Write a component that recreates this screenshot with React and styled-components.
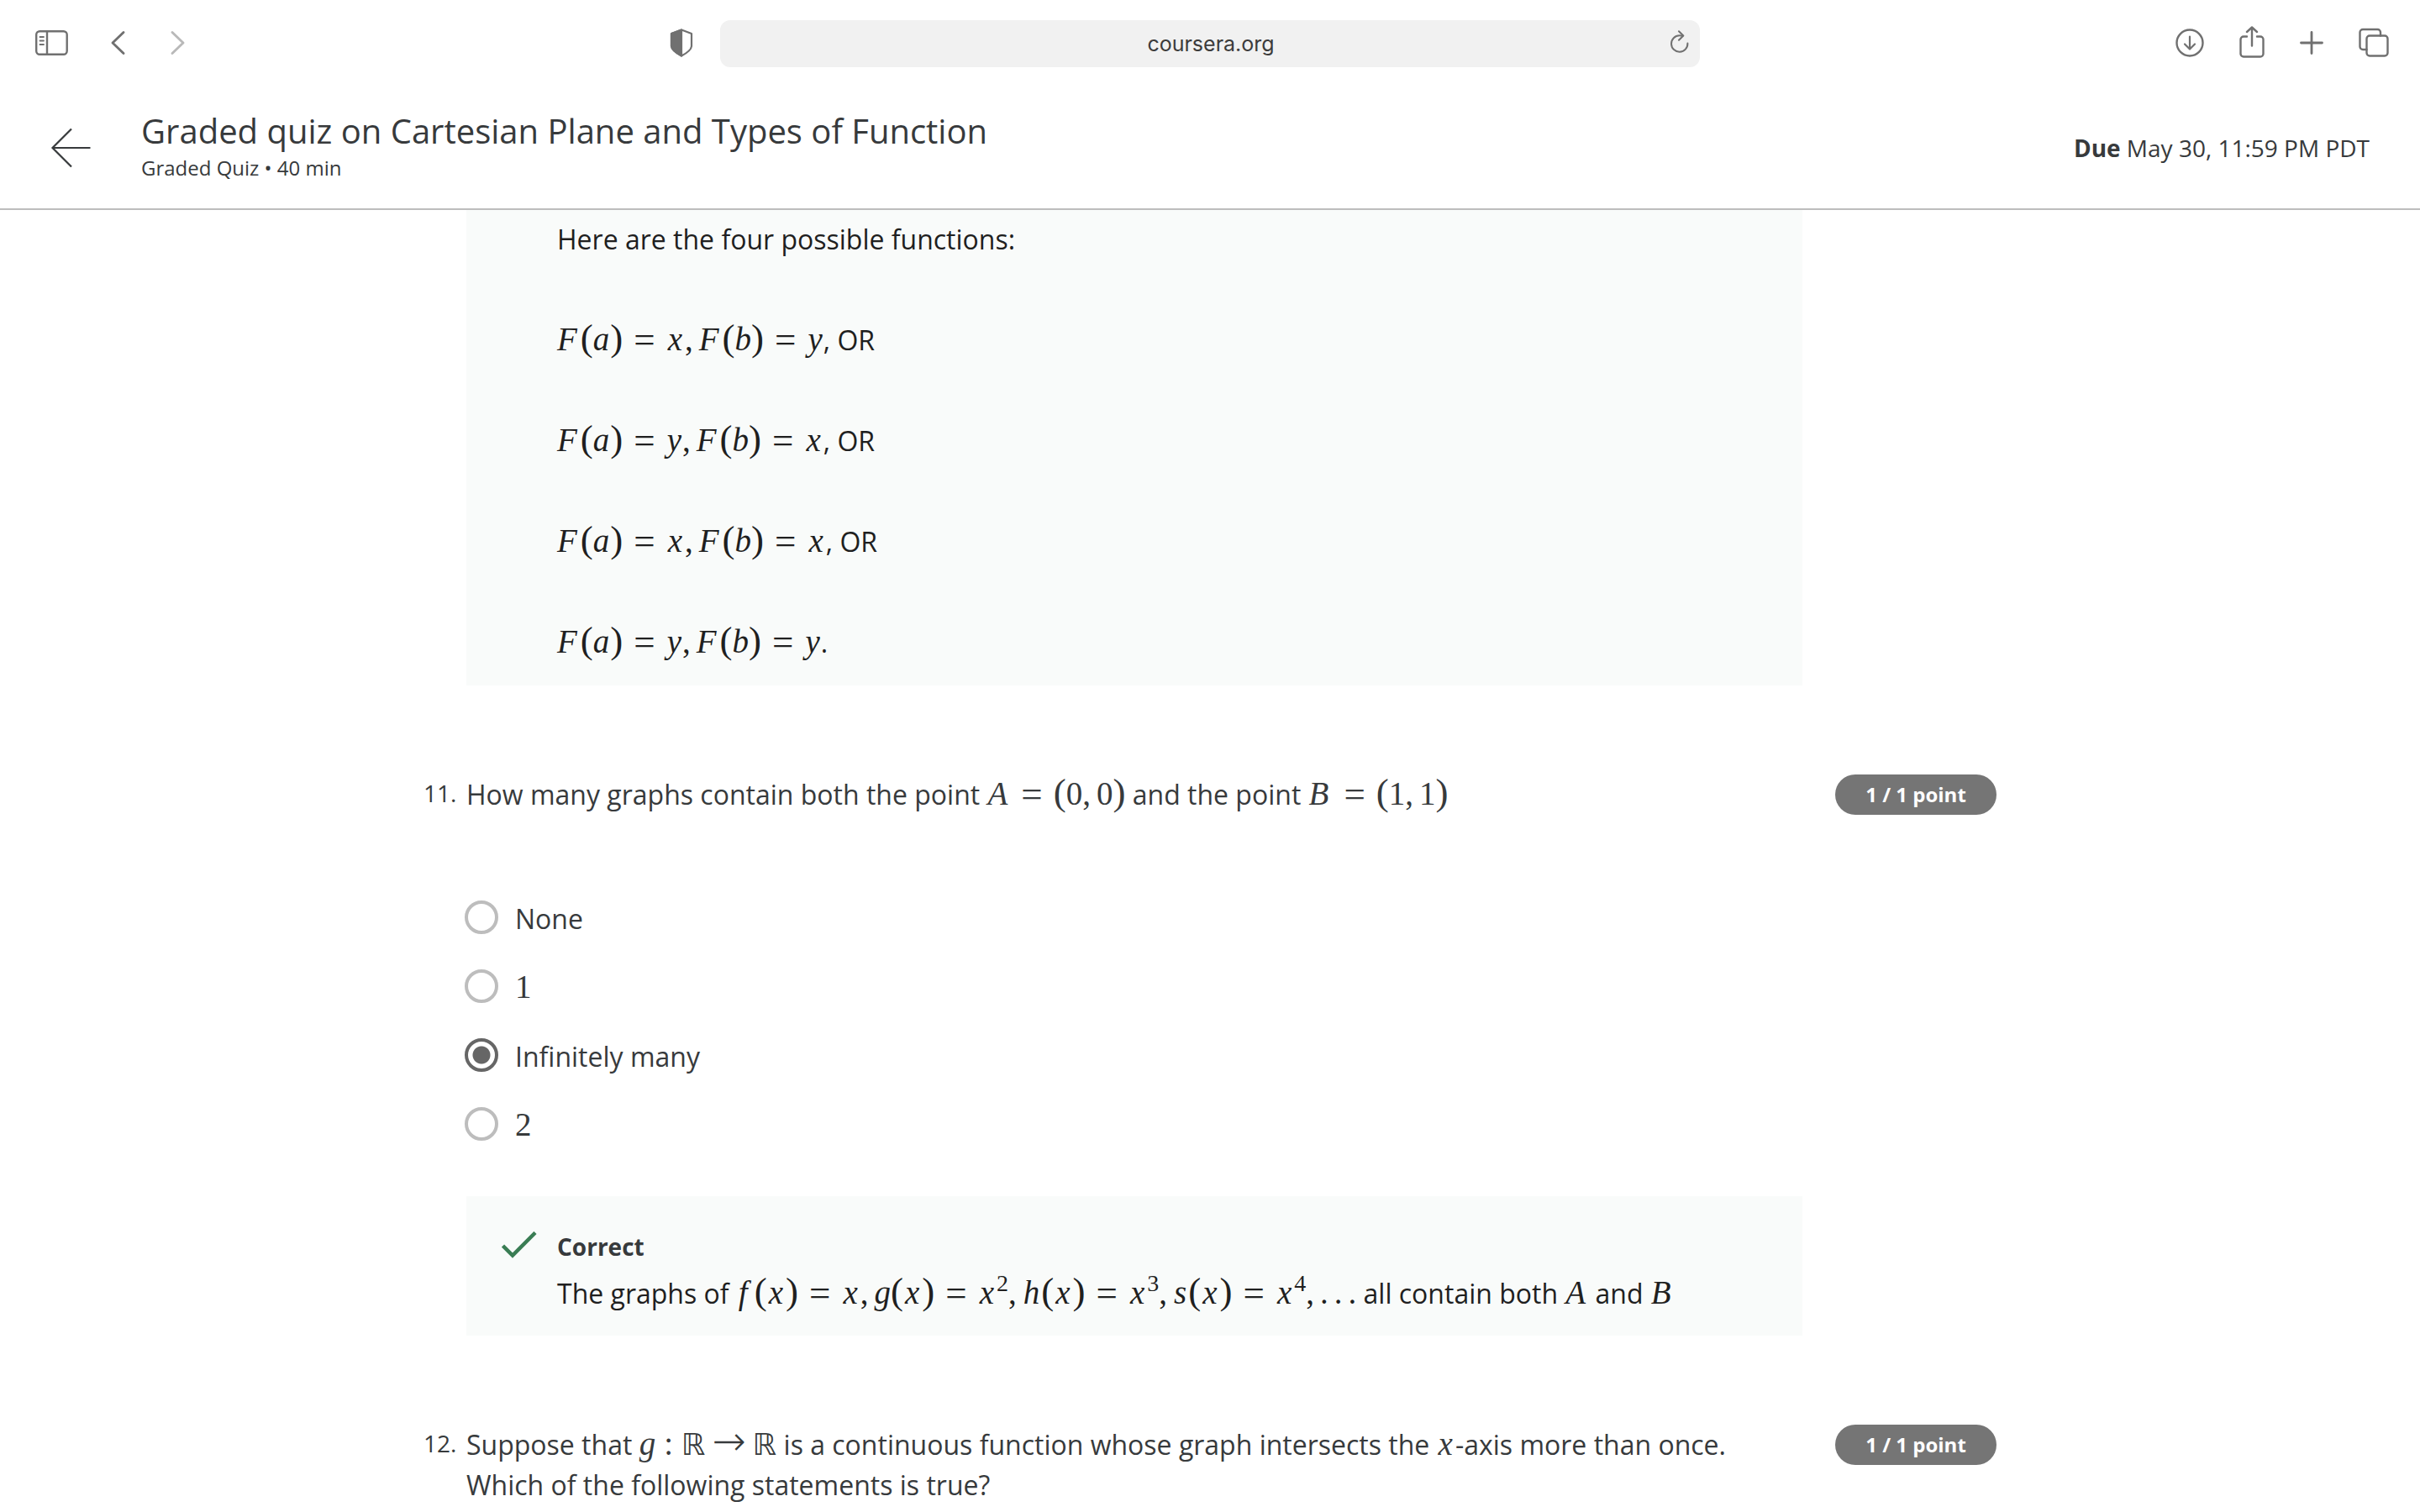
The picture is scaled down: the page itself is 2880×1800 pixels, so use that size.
import React from "react";
import styled, { createGlobalStyle } from "styled-components";

const GlobalStyle = createGlobalStyle`
  * { box-sizing: border-box; }
  html, body, #root { height: 100%; }
  body {
    margin: 0;
    background: #fff;
    color: #373a3c;
    font-family: "Open Sans", "Noto Sans", sans-serif;
    font-size: 32px;
    line-height: 48px;
  }
`;

const Page = styled.div`
  display: flex;
  flex-direction: column;
  height: 100vh;
  overflow: hidden;
`;

const Toolbar = styled.div`
  flex: none;
  display: flex;
  align-items: center;
  gap: 32px;
  padding: 24px 37px 22px;
`;

const ToolGroup = styled.div`
  flex: 1;
  display: flex;
  align-items: center;
  gap: ${(p) => p.$gap}px;
  padding-bottom: 2px;
  justify-content: ${(p) => (p.$end ? "flex-end" : "flex-start")};
`;

const IconButton = styled.button`
  display: flex;
  padding: 0;
  border: 0;
  background: none;
  color: ${(p) => (p.$dim ? "#b9b9b9" : "#707070")};
  margin-left: ${(p) => (p.$push ? "auto" : 0)};
`;

const AddressBar = styled.div`
  flex: 0 0 1166px;
  display: grid;
  grid-template-columns: 38px 1fr 36px;
  align-items: center;
  height: 56px;
  border-radius: 12px;
  background: #f1f1f1;
`;

const Address = styled.input`
  grid-column: 2;
  min-width: 0;
  padding: 0;
  border: 0;
  background: none;
  color: #3c3c3c;
  text-align: center;
  font: 25px/40px Inter, sans-serif;
`;

const Header = styled.header`
  flex: none;
  display: flex;
  align-items: center;
  gap: 60px;
  padding: 28px 60px 26px;
  border-bottom: 2px solid #bdbdbd;
`;

const Heading = styled.div`
  flex: 1;
`;

const Title = styled.h1`
  margin: 0;
  font-size: 40px;
  line-height: 52px;
  font-weight: 400;
`;

const Subtitle = styled.p`
  margin: 0 0 4px;
  font-size: 24px;
  line-height: 36px;
`;

const Due = styled.p`
  margin: 0;
  font-size: 28px;
  line-height: 40px;
`;

const Content = styled.main`
  flex: 1;
  min-height: 0;
  overflow: hidden;
  width: 65%;
  margin: 0 auto;
`;

const Question = styled.section`
  display: grid;
  grid-template-columns: 51px 1fr 192px;
  margin-bottom: 106px;
`;

const Number = styled.span`
  font-size: 28px;
  line-height: 44px;
`;

const Body = styled.div`
  margin-right: 39px;
`;

const Prompt = styled.div``;

const Badge = styled.span`
  align-self: start;
  border-radius: 24px;
  background: #757575;
  color: #fff;
  text-align: center;
  font-size: 24px;
  line-height: 48px;
  font-weight: 700;
`;

const Options = styled.fieldset`
  display: grid;
  gap: 34px;
  margin: 100px 0 60px;
  padding: 0;
  border: 0;
`;

const Option = styled.label`
  display: flex;
  align-items: center;
  gap: 20px;
  margin-left: -2px;
`;

const Radio = styled.input`
  appearance: none;
  flex: none;
  width: 40px;
  height: 40px;
  margin: 0 0 4px;
  border: 4px solid #bdbdbd;
  border-radius: 50%;
  &:checked {
    border-color: #666;
    background: radial-gradient(circle, #666 0 10px, transparent 11px);
  }
`;

const Feedback = styled.div`
  display: grid;
  grid-template-columns: 66px 1fr;
  padding: ${(p) => (p.$continued ? "11px 42px 27px" : "36px 42px 26px")};
  background: #f9fbfa;
  color: #1f1f1f;
`;

const FeedbackBody = styled.div`
  grid-column: 2;
  display: grid;
  gap: ${(p) => p.$gap}px;
`;

const Verdict = styled.strong`
  color: #373a3c;
  font-size: 28px;
`;

const Line = styled.p`
  margin: 0;
`;

const Formula = styled.span`
  font-family: "Liberation Serif", serif;
  font-size: 39px;
  line-height: 40px;
  white-space: nowrap;
`;

const Letter = styled.i`
  margin: 0 ${(p) => p.$after}px 0 ${(p) => p.$before}px;
`;

const Paren = styled.span`
  font-size: 45px;
  line-height: 0;
`;

const Relation = styled.span`
  margin: 0 13px;
  font-size: 45px;
  line-height: 0;
  vertical-align: -2px;
`;

const Colon = styled.span`
  margin: 0 10px;
`;

const Arrow = styled.span`
  margin: 0 8px;
  font-family: "DejaVu Sans", sans-serif;
  font-size: 48px;
  font-weight: 200;
  line-height: 0;
`;

const Punctuation = styled.span`
  margin-right: 7px;
`;

const Power = styled.sup`
  font-size: 28px;
  line-height: 0;
  vertical-align: 15px;
`;

const Blackboard = styled.span`
  font-family: "DejaVu Sans", sans-serif;
  font-size: 36px;
  line-height: 0;
`;

const CheckSlot = styled.div`
  padding-top: 2px;
`;

const stroke = { fill: "none", stroke: "currentColor", strokeLinecap: "round", strokeLinejoin: "round" };

const SidebarIcon = () => (
  <svg width="44" height="32" viewBox="0 0 44 32" {...stroke} strokeWidth="2.4">
    <rect x="6.200" y="2.200" width="36.500" height="27.600" rx="4" />
    <path d="M19 2.200v27.600" />
    <path d="M10.500 9h4.500M10.500 13.500h4.500M10.500 18h4.500" strokeWidth="1.800" />
  </svg>
);
const ChevronIcon = ({ right }) => (
  <svg width="20" height="32" viewBox="0 0 20 32" {...stroke} strokeWidth="2.900">
    <path d={right ? "M4 3.500l13 12.500-13 12.500" : "M16 3.500L3 16l13 12.500"} />
  </svg>
);
const ShieldIcon = () => (
  <svg width="28" height="34" viewBox="0 0 28 34" {...stroke} strokeWidth="2.200">
    <path d="M14 1.500L26 6V21Q25.500 26.500 14 32.500Q2.500 26.500 2 21V6Z" />
    <path d="M14 1.500L2 6V21Q2.500 26.500 14 32.500Z" fill="currentColor" />
  </svg>
);
const ReloadIcon = () => (
  <svg width="24" height="32" viewBox="0 0 24 32" {...stroke} strokeWidth="2">
    <path d="M15.500 6.800Q13.800 6.300 11.700 6.300A9.700 9.700 0 1 0 21.400 15.500" />
    <path d="M11 1.200l5.300 5.300-5.300 5.300" />
  </svg>
);
const DownloadIcon = () => (
  <svg width="34" height="34" viewBox="0 0 34 34" {...stroke} strokeWidth="2.400">
    <circle cx="17" cy="17" r="15.500" />
    <path d="M17 9.500v14.500M11 18.500l6 6 6-6" strokeWidth="2.200" />
  </svg>
);
const ShareIcon = () => (
  <svg width="30" height="40" viewBox="0 0 30 40" {...stroke} strokeWidth="2.400">
    <path d="M9 12.500H5a3.500 3.500 0 0 0-3.500 3.500v17a3.500 3.500 0 0 0 3.500 3.500h20a3.500 3.500 0 0 0 3.500-3.500V16a3.500 3.500 0 0 0-3.500-3.500h-4" />
    <path d="M15 23.500V1.500M9 7l6-5.500 6 5.500" />
  </svg>
);
const PlusIcon = () => (
  <svg width="28" height="28" viewBox="0 0 28 28" {...stroke} strokeWidth="2.800">
    <path d="M14 1.500v25M1.500 14h25" />
  </svg>
);
const TabsIcon = () => (
  <svg width="36" height="36" viewBox="0 0 36 36" {...stroke} strokeWidth="2.400">
    <rect x="9.500" y="9.500" width="25" height="24" rx="3.500" />
    <path d="M9.500 26H5a3.500 3.500 0 0 1-3.500-3.500V5.500a3.500 3.500 0 0 1 3.500-3.500h17.500a3.500 3.500 0 0 1 3.500 3.500v4" />
  </svg>
);
const BackIcon = () => (
  <svg width="48" height="48" viewBox="0 0 48 48" fill="none" stroke="#373a3c" strokeWidth="2.200">
    <path d="M25 1.500L2.500 24L25 46.500M2.500 24h45" />
  </svg>
);
const CheckIcon = () => (
  <svg width="42" height="32" viewBox="0 0 42 32" fill="none" stroke="#3a7d54" strokeWidth="4.500">
    <path d="M1.500 17L13 28.500L40 1.500" />
  </svg>
);

// Side bearings that give each math letter room, in pixels.
const bearings = {
  F: [0, 4], a: [0, 1], x: [2, 3], y: [1, 1], f: [3, 8], h: [1, 2], s: [1, 2], A: [1, 3], B: [1, 5],
};

const V = ({ children }) => {
  const [before, after] = bearings[children] || [0, 0];
  return <Letter $before={before} $after={after}>{children}</Letter>;
};

const Apply = ({ fn, arg }) => (
  <>
    <V>{fn}</V><Paren>(</Paren><V>{arg}</V><Paren>)</Paren>
  </>
);

const Equals = () => <Relation>=</Relation>;
const Comma = () => <Punctuation>,</Punctuation>;

const Point = ({ name, value }) => (
  <Formula>
    <V>{name}</V><Equals /><Paren>(</Paren>{value}<Comma />{value}<Paren>)</Paren>
  </Formula>
);

const Mapping = ({ a, b }) => (
  <Formula>
    <Apply fn="F" arg="a" /><Equals /><V>{a}</V><Comma />
    <Apply fn="F" arg="b" /><Equals /><V>{b}</V>
  </Formula>
);

const options = [
  { id: "none", label: "None" },
  { id: "one", label: <Formula>1</Formula> },
  { id: "many", label: "Infinitely many" },
  { id: "two", label: <Formula>2</Formula> },
];

export default function App() {
  return (
    <Page>
      <GlobalStyle />
      <Toolbar>
        <ToolGroup $gap={50}>
          <IconButton aria-label="Sidebar"><SidebarIcon /></IconButton>
          <IconButton aria-label="Back"><ChevronIcon /></IconButton>
          <IconButton aria-label="Forward" $dim><ChevronIcon right /></IconButton>
          <IconButton aria-label="Privacy report" $push><ShieldIcon /></IconButton>
        </ToolGroup>
        <AddressBar>
          <Address aria-label="Address" defaultValue="coursera.org" />
          <IconButton aria-label="Reload"><ReloadIcon /></IconButton>
        </AddressBar>
        <ToolGroup $gap={42} $end>
          <IconButton aria-label="Downloads"><DownloadIcon /></IconButton>
          <IconButton aria-label="Share"><ShareIcon /></IconButton>
          <IconButton aria-label="New tab"><PlusIcon /></IconButton>
          <IconButton aria-label="Tabs"><TabsIcon /></IconButton>
        </ToolGroup>
      </Toolbar>

      <Header>
        <IconButton aria-label="Leave quiz"><BackIcon /></IconButton>
        <Heading>
          <Title>Graded quiz on Cartesian Plane and Types of Function</Title>
          <Subtitle>Graded Quiz • 40 min</Subtitle>
        </Heading>
        <Due><b>Due</b> May 30, 11:59 PM PDT</Due>
      </Header>

      <Content>
        <Question>
          <Number />
          <Body>
            <Feedback $continued>
              <FeedbackBody $gap={72}>
                <Line>Here are the four possible functions:</Line>
                <Line><Mapping a="x" b="y" />, OR</Line>
                <Line><Mapping a="y" b="x" />, OR</Line>
                <Line><Mapping a="x" b="x" />, OR</Line>
                <Line><Mapping a="y" b="y" />.</Line>
              </FeedbackBody>
            </Feedback>
          </Body>
        </Question>

        <Question>
          <Number>11.</Number>
          <Body>
            <Prompt>
              How many graphs contain both the point <Point name="A" value="0" /> and the point{" "}
              <Point name="B" value="1" />
            </Prompt>
            <Options aria-label="Answer">
              {options.map((o) => (
                <Option key={o.id} htmlFor={o.id}>
                  <Radio type="radio" name="q11" id={o.id} defaultChecked={o.id === "many"} />
                  <span>{o.label}</span>
                </Option>
              ))}
            </Options>
            <Feedback>
              <CheckSlot><CheckIcon /></CheckSlot>
              <FeedbackBody $gap={8}>
                <Verdict>Correct</Verdict>
                <Line>
                  The graphs of{" "}
                  <Formula>
                    <Apply fn="f" arg="x" /><Equals /><V>x</V><Comma />
                    <Apply fn="g" arg="x" /><Equals /><V>x</V><Power>2</Power><Comma />
                    <Apply fn="h" arg="x" /><Equals /><V>x</V><Power>3</Power><Comma />
                    <Apply fn="s" arg="x" /><Equals /><V>x</V><Power>4</Power><Comma />
                    <Punctuation>.</Punctuation><Punctuation>.</Punctuation>.
                  </Formula>
                  {" "}all contain both <Formula><V>A</V></Formula> and <Formula><V>B</V></Formula>
                </Line>
              </FeedbackBody>
            </Feedback>
          </Body>
          <Badge>1 / 1 point</Badge>
        </Question>

        <Question>
          <Number>12.</Number>
          <Body>
            <Prompt>
              Suppose that{" "}
              <Formula>
                <V>g</V><Colon>:</Colon><Blackboard>ℝ</Blackboard>
                <Arrow>→</Arrow><Blackboard>ℝ</Blackboard>
              </Formula>
              {" "}is a continuous function whose graph intersects the{" "}
              <Formula><V>x</V></Formula>-axis more than once.
              <br />
              Which of the following statements is true?
            </Prompt>
          </Body>
          <Badge>1 / 1 point</Badge>
        </Question>
      </Content>
    </Page>
  );
}
